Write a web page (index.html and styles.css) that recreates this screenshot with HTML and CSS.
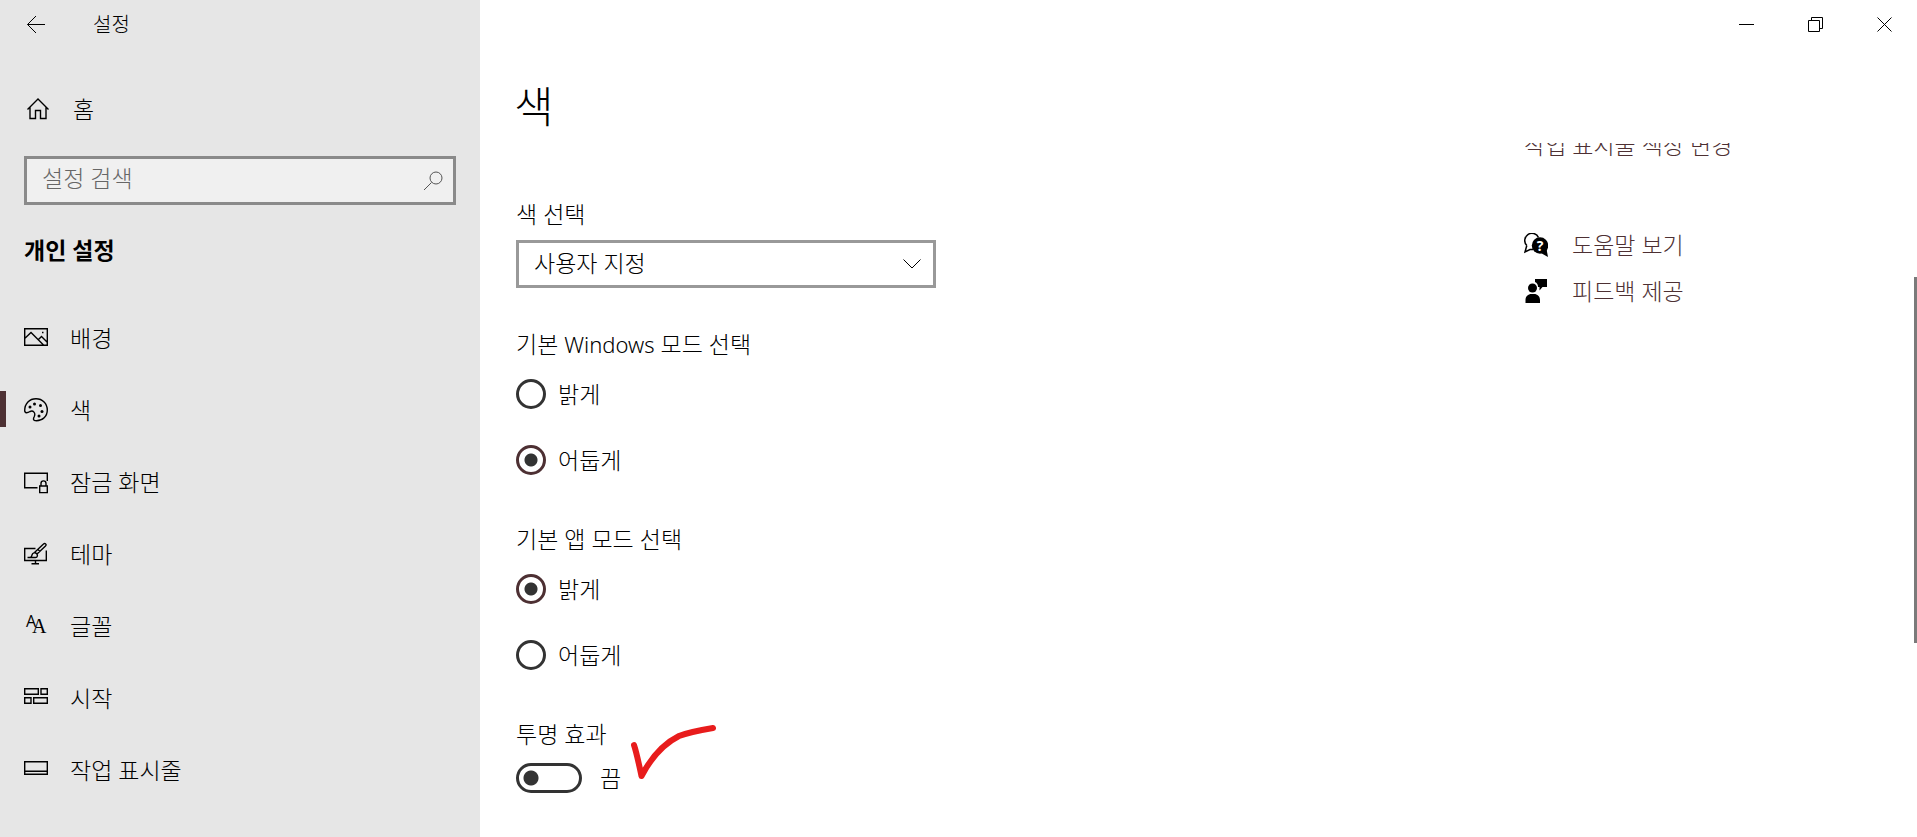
FILE: index.html
```html
<!DOCTYPE html>
<html lang="ko">
<head>
  <meta charset="UTF-8">
  <meta name="viewport" content="width=device-width, initial-scale=1.0">
  <title>설정</title>
  <link rel="stylesheet" href="styles.css">
</head>
<body>
  <div class="window">
    <aside class="sidebar">
      <div class="title-bar">
        <button class="back-btn" aria-label="뒤로">
          <svg class="icon" width="24" height="24" viewBox="0 0 24 24"><path d="M21 11.500H3.500M12 3 3.500 11.500l8.500 8.500"/></svg>
        </button>
        <span class="title">설정</span>
      </div>

      <a class="home" href="#">
        <svg class="icon bold" width="24" height="24" viewBox="0 0 24 24"><path d="M1.500 12.500 12 2l10.500 10.500M4 10.500V21.500h5.500v-8h5v8H20V10.500"/></svg>
        <span>홈</span>
      </a>

      <div class="search">
        <input type="text" class="search-input" placeholder="설정 검색" aria-label="설정 검색">
        <svg class="icon search-icon" width="24" height="24" viewBox="0 0 24 24"><circle cx="15" cy="9" r="6"/><path d="M10.500 13.500 3 21"/></svg>
      </div>

      <h2 class="category">개인 설정</h2>

      <nav class="nav">
        <a class="nav-item" href="#">
          <svg class="icon bold" width="24" height="24" viewBox="0 0 24 24"><path d="M.700 2.700h22.600v16.600H.700zM.700 12.500 7 6.500l12.500 12.500M14 14l3.500-3.500 5.500 5.500"/><path d="M18 6.500h1.500"/></svg>
          <span>배경</span>
        </a>
        <a class="nav-item active" href="#">
          <svg class="icon bold" width="24" height="24" viewBox="0 0 24 24"><path d="M.700 12.500C.700 5.500 5.500.700 12 .700S23.300 5.500 23.300 12 18.500 22.800 12.500 22.800c-4 0-3.200-2.300-2.200-4.300 1.500-3.500-1-6.500-4.300-5C3.500 15 .700 15.500.700 12.500z"/><g class="dots"><circle cx="6" cy="9" r="1.500"/><circle cx="10.500" cy="6" r="1.500"/><circle cx="16.500" cy="7.500" r="1.500"/><circle cx="18" cy="13.500" r="1.500"/><circle cx="15" cy="18" r="1.500"/></g></svg>
          <span>색</span>
        </a>
        <a class="nav-item" href="#">
          <svg class="icon bold" width="24" height="24" viewBox="0 0 24 24"><path d="M13.500 17.700H.700V3.300h22.600V11M15.700 16h7.600v6.600h-7.600zM17 16V13.500c0-3.500 5-3.500 5 0V16"/></svg>
          <span>잠금 화면</span>
        </a>
        <a class="nav-item" href="#">
          <svg class="icon bold" width="24" height="24" viewBox="0 0 24 24"><path d="M11.500 6.500H.700v12h21.600V8.500M11.500 18.500v3M7.500 21.700h7.500M3.500 15.500c4 0 4-.500 4.500-2.500s3-3 4.500-1.500 1 4-1 4H4M10.500 10.500l9-8.500c1.500-1.500 3.500.500 2 2l-9 8.500M14 7.500l2 2"/></svg>
          <span>테마</span>
        </a>
        <a class="nav-item" href="#">
          <svg class="letters" width="24" height="24" viewBox="0 0 24 24"><text class="letter-sans" x="2" y="13">A</text><text class="letter-serif" x="8" y="19">A</text></svg>
          <span>글꼴</span>
        </a>
        <a class="nav-item" href="#">
          <svg class="icon bold" width="24" height="24" viewBox="0 0 24 24"><path d="M.700 2.700h13.600v5.600H.700zM17 2.700h6.300v5.600H17zM.700 11.700H7v5.600H.700zM9.700 11.700h13.600v5.600H9.700z"/></svg>
          <span>시작</span>
        </a>
        <a class="nav-item" href="#">
          <svg class="icon bold" width="24" height="24" viewBox="0 0 24 24"><path d="M.700 3.700h22.600v12.600H.700zM.700 13.300h22.600"/></svg>
          <span>작업 표시줄</span>
        </a>
      </nav>
    </aside>

    <main class="main">
      <div class="window-controls">
        <button class="window-btn" aria-label="최소화">
          <svg class="icon" width="15" height="15" viewBox="0 0 15 15"><path d="M0 7.500h15"/></svg>
        </button>
        <button class="window-btn" aria-label="이전 크기로 복원">
          <svg class="icon" width="15" height="15" viewBox="0 0 15 15"><path d="M.500 3.500h11v11H.500zM3.500 3.500v-3h11v11h-3"/></svg>
        </button>
        <button class="window-btn" aria-label="닫기">
          <svg class="icon" width="15" height="15" viewBox="0 0 15 15"><path d="M.500.500l14 14M14.500.500l-14 14"/></svg>
        </button>
      </div>

      <h1 class="page-title">색</h1>

      <div class="content">
        <form class="settings">
          <div class="field">
            <label class="field-label" for="colorMode">색 선택</label>
            <div class="select-box">
              <select id="colorMode" class="select">
                <option>밝게</option>
                <option>어둡게</option>
                <option selected>사용자 지정</option>
              </select>
              <svg class="icon chevron" width="18" height="10" viewBox="0 0 18 10"><path d="M.500.500 9 9 17.500.500"/></svg>
            </div>
          </div>

          <fieldset class="options">
            <legend class="field-label">기본 <span class="latin">Windows</span> 모드 선택</legend>
            <label class="radio"><input type="radio" name="windowsMode"><span>밝게</span></label>
            <label class="radio"><input type="radio" name="windowsMode" checked><span>어둡게</span></label>
          </fieldset>

          <fieldset class="options">
            <legend class="field-label">기본 앱 모드 선택</legend>
            <label class="radio"><input type="radio" name="appMode" checked><span>밝게</span></label>
            <label class="radio"><input type="radio" name="appMode"><span>어둡게</span></label>
          </fieldset>

          <div class="field">
            <label class="field-label" for="transparency">투명 효과</label>
            <div class="toggle-row">
              <input type="checkbox" role="switch" id="transparency" class="toggle">
              <span>끔</span>
              <svg class="check-mark" width="90" height="60" viewBox="0 0 90 60"><path d="M8 22c3 9 5 20 7.500 31C26 33 39 20 53 13 63 9 75 7 87 5"/></svg>
            </div>
          </div>
        </form>

        <div class="related">
          <a class="related-link" href="#">작업 표시줄 색상 변경</a>
          <a class="support-link" href="#">
            <svg width="24" height="24" viewBox="0 0 24 24"><path class="bubble" d="M2.800 12.500A7.200 7.200 0 1 1 14.500 4.500M2.800 12.500 1 19l5-2.500h3"/><circle cx="16" cy="12.500" r="8.200"/><path d="M16 19.500l8 4.500-1.500-8z"/><text class="question" x="16" y="18">?</text></svg>
            <span>도움말 보기</span>
          </a>
          <a class="support-link" href="#">
            <svg width="24" height="24" viewBox="0 0 24 24"><circle cx="8.500" cy="9" r="4.500"/><path d="M1.500 24v-3c0-3.500 2.500-6 6-6h2.500c3.500 0 6 2.500 6 6v3zM11 0h12v8h-4.500l-3 3.500V8H14c0-2.500-1-4-3-5z"/></svg>
            <span>피드백 제공</span>
          </a>
        </div>
      </div>
      <div class="scroll-thumb"></div>
    </main>
  </div>
</body>
</html>
```

FILE: styles.css
```css
* {
  box-sizing: border-box;
}
body {
  margin: 0;
  font-family: 'Noto Sans', 'Noto Sans CJK KR', sans-serif;
  font-size: 23px;
  font-weight: 300;
  line-height: 30px;
  color: #000;
  background-color: #fff;
}
a {
  color: inherit;
  text-decoration: none;
}
button {
  display: flex;
  align-items: center;
  justify-content: center;
  padding: 0;
  border: none;
  background: none;
}
svg {
  flex-shrink: 0;
}
.window {
  display: flex;
  height: 100vh;
  overflow: hidden;
}
.icon {
  fill: none;
  stroke: #000;
  stroke-width: 1;
}
.icon.bold {
  stroke-width: 1.4;
}

/* Sidebar */
.sidebar {
  width: 480px;
  flex-shrink: 0;
  background-color: #e6e6e6;
}
.title-bar {
  display: flex;
  align-items: center;
  height: 49px;
}
.back-btn {
  width: 72px;
  height: 48px;
}
.title {
  margin-left: 21px;
  font-size: 20px;
}
.home {
  display: flex;
  align-items: center;
  gap: 23px;
  height: 72px;
  margin-top: 24px;
  padding: 0 26px;
}
.search {
  position: relative;
  margin: 11px 24px 0;
}
.search-input {
  display: block;
  width: 100%;
  height: 49px;
  padding: 0 48px 5px 15px;
  border: 3px solid #8a8a8a;
  border-radius: 0;
  background-color: #f0f0f0;
  font: inherit;
}
.search-input::placeholder {
  color: #666;
  opacity: 1;
}
.search-icon {
  position: absolute;
  top: 13px;
  right: 11px;
  stroke: #555;
}
.category {
  margin: 30px 24px 37px;
  font-size: 23px;
  font-weight: bold;
  line-height: 30px;
}
.nav-item {
  display: flex;
  align-items: center;
  gap: 22px;
  height: 72px;
  padding: 0 24px;
}
.nav-item.active {
  padding-left: 18px;
  border-left: 6px solid #4d3033;
  border-image: linear-gradient(transparent 17px, #4d3033 17px, #4d3033 53px, transparent 53px) 0 0 0 6;
}
.dots {
  fill: #000;
  stroke: none;
}
.letters {
  overflow: visible;
}
.letter-sans {
  font: 400 16px 'Open Sans', sans-serif;
}
.letter-serif {
  font: 400 20px 'Liberation Serif', serif;
}

/* Main area */
.main {
  position: relative;
  display: flex;
  flex-direction: column;
  flex: 1;
}
.window-controls {
  display: flex;
  justify-content: flex-end;
  gap: 4px;
}
.window-btn {
  width: 65px;
  height: 49px;
}
.page-title {
  margin: 28px 34px 6px;
  font-size: 43px;
  font-weight: 300;
  line-height: 60px;
}
.content {
  display: flex;
  justify-content: space-between;
  flex: 1;
  min-height: 0;
  overflow: hidden;
}
.settings {
  width: 456px;
  padding: 56px 0 0 36px;
}
.field-label {
  display: block;
  padding: 0;
}
.latin {
  font-size: 22px;
}
.select-box {
  position: relative;
  margin: 11px 0 41px;
}
.select {
  display: block;
  width: 100%;
  height: 48px;
  padding: 0 48px 2px 15px;
  border: 3px solid #999;
  border-radius: 0;
  appearance: none;
  background-color: #fff;
  color: #000;
  font: inherit;
}
.chevron {
  position: absolute;
  top: 19px;
  right: 15px;
  pointer-events: none;
}
.options {
  margin: 0 0 49px;
  padding: 0;
  border: none;
}
.radio {
  display: flex;
  align-items: center;
  gap: 12px;
  margin-top: 36px;
}
legend + .radio {
  margin-top: 20px;
}
.radio input {
  width: 30px;
  height: 30px;
  margin: 0;
  border: 3px solid #333;
  border-radius: 50%;
  appearance: none;
}
.radio input:checked {
  border-color: #4d3033;
  background: radial-gradient(circle, #333 6px, transparent 7px);
}
.toggle-row {
  position: relative;
  display: flex;
  align-items: center;
  gap: 18px;
  margin-top: 14px;
}
.toggle {
  width: 66px;
  height: 30px;
  margin: 0;
  border: 3px solid #333;
  border-radius: 15px;
  appearance: none;
  background: radial-gradient(circle at 12px 12px, #333 7px, transparent 8px);
}
.check-mark {
  position: absolute;
  top: -40px;
  left: 110px;
  fill: none;
  stroke: #e81c1c;
  stroke-width: 6;
  stroke-linecap: round;
  stroke-linejoin: round;
}
.related {
  width: 393px;
  color: #4d3033;
}
/* First link is scrolled partly under the page title */
.related-link {
  display: block;
  margin: -13px 0 62px;
}
.support-link {
  display: flex;
  align-items: center;
  gap: 24px;
  height: 46px;
}
.bubble {
  fill: none;
  stroke: #000;
  stroke-width: 1.5;
}
.question {
  fill: #fff;
  font: bold 14px 'Open Sans', sans-serif;
  text-anchor: middle;
}
.scroll-thumb {
  position: absolute;
  top: 277px;
  right: 0;
  width: 3px;
  height: 366px;
  background-color: #7a7a7a;
}
```
